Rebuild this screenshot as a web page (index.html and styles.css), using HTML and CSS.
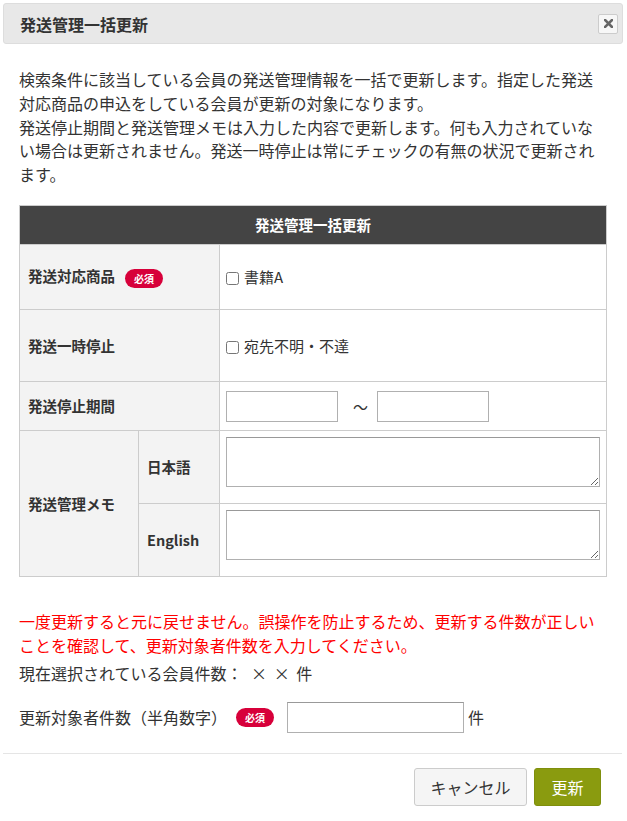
FILE: index.html
```html
<!DOCTYPE html>
<html lang="ja">
<head>
<meta charset="UTF-8">
<meta name="viewport" content="width=device-width, initial-scale=1.0">
<title>発送管理一括更新</title>
<link rel="stylesheet" href="styles.css">
</head>
<body>
<div class="modal">
    <div class="modal-header">
        <h3 class="modal-title">発送管理一括更新</h3>
        <button type="button" class="close" aria-label="閉じる">
            <svg width="9" height="9" viewBox="0 0 9 9"><path d="M1 1L8 8M8 1L1 8" stroke="#666" stroke-width="2.6" stroke-linecap="square"/></svg>
        </button>
    </div>

    <div class="modal-body">
        <p class="lead">検索条件に該当している会員の発送管理情報を一括で更新します。指定した発送対応商品の申込をしている会員が更新の対象になります。<br>発送停止期間と発送管理メモは入力した内容で更新します。何も入力されていない場合は更新されません。発送一時停止は常にチェックの有無の状況で更新されます。</p>

        <table class="form-table">
            <colgroup>
                <col class="col-label">
                <col class="col-sub">
                <col>
            </colgroup>
            <tr>
                <th colspan="3" class="caption">発送管理一括更新</th>
            </tr>
            <tr class="row-product">
                <td colspan="2" class="label">発送対応商品<span class="badge">必須</span></td>
                <td class="value"><label><input type="checkbox">書籍A</label></td>
            </tr>
            <tr class="row-stop">
                <td colspan="2" class="label">発送一時停止</td>
                <td class="value"><label><input type="checkbox">宛先不明・不達</label></td>
            </tr>
            <tr class="row-period">
                <td colspan="2" class="label">発送停止期間</td>
                <td class="value"><input type="text" class="date"><span class="tilde">〜</span><input type="text" class="date"></td>
            </tr>
            <tr class="row-memo">
                <td rowspan="2" class="label">発送管理メモ</td>
                <td class="label">日本語</td>
                <td class="value"><textarea></textarea></td>
            </tr>
            <tr class="row-memo">
                <td class="label">English</td>
                <td class="value"><textarea></textarea></td>
            </tr>
        </table>

        <p class="notice">一度更新すると元に戻せません。誤操作を防止するため、更新する件数が正しいことを確認して、更新対象者件数を入力してください。</p>
        <p class="count">現在選択されている会員件数：<span class="count-num"> × × 件</span></p>

        <div class="target-row">
            <span>更新対象者件数（半角数字）</span>
            <span class="badge">必須</span>
            <input type="text" class="target-input">
            <span class="unit">件</span>
        </div>
    </div>

    <div class="modal-footer">
        <button type="button" class="btn btn-cancel">キャンセル</button>
        <button type="button" class="btn btn-submit">更新</button>
    </div>
</div>
</body>
</html>
```

FILE: styles.css
```css
/* Global styles */
body {
    margin: 0;
    padding: 0;
    font-family: "Noto Sans CJK JP", "Noto Sans", sans-serif;
    font-size: 16px;
    color: #333;
    background-color: #fff;
}

/* Header */
.modal-header {
    display: flex;
    align-items: center;
    justify-content: space-between;
    height: 39px;
    margin: 3px 4px 0 3px;
    padding: 0 4px 0 16px;
    background-color: #e8e8e8;
    border: 1px solid #ddd;
    border-radius: 3px;
}
.modal-title {
    margin: 0;
    font-size: 16px;
    font-weight: bold;
}
.close {
    display: flex;
    align-items: center;
    justify-content: center;
    width: 20px;
    height: 20px;
    padding: 0;
    box-sizing: border-box;
    background-color: #f7f7f7;
    border: 1px solid #ccc;
    border-radius: 2px;
}

/* Body */
.modal-body {
    padding: 24px 20px 0 19px;
}
.lead {
    margin: 0 0 18px;
    line-height: 23.75px;
}

.form-table {
    width: 100%;
    table-layout: fixed;
    border-collapse: collapse;
    border: 1px solid #ccc;
}
.col-label {
    width: 119px;
}
.col-sub {
    width: 81px;
}
.form-table th,
.form-table td {
    border: 1px solid #ccc;
    padding: 0;
}
.caption {
    height: 38px;
    background-color: #444;
    color: #fff;
    font-size: 14.5px;
    font-weight: bold;
}
.label {
    padding-left: 8px !important;
    background-color: #f3f3f3;
    font-size: 14.5px;
    font-weight: bold;
}
.value {
    padding-left: 6px !important;
    padding-right: 6px !important;
    font-size: 15px;
}
.row-product td {
    height: 64px;
}
.row-stop td {
    height: 71px;
}
.row-period td {
    height: 48px;
}
.row-period .value {
    line-height: 31px;
}
.row-memo .value {
    padding-top: 6px !important;
    padding-bottom: 16px !important;
}

.value input[type="checkbox"] {
    width: 13px;
    height: 13px;
    margin: 0 5px 0 0;
    vertical-align: -2px;
}
.date {
    width: 112px;
    height: 31px;
    box-sizing: border-box;
    border: 1px solid #b0b0b0;
    vertical-align: middle;
}
.tilde {
    display: inline-block;
    margin: 0 9px 0 15px;
    vertical-align: middle;
}
textarea {
    display: block;
    width: 100%;
    height: 50px;
    box-sizing: border-box;
    border: 1px solid #b0b0b0;
    border-top-color: #999;
}

.badge {
    display: inline-flex;
    align-items: center;
    justify-content: center;
    width: 38px;
    height: 19px;
    margin-left: 10px;
    vertical-align: middle;
    background-color: #d7003a;
    color: #fff;
    font-size: 10px;
    font-weight: bold;
    border-radius: 10px;
}

.notice {
    margin: 32px 0 4px;
    line-height: 24px;
    color: #f00;
}
.count {
    margin: 0;
    line-height: 24px;
}
.count-num {
    word-spacing: 3px;
    margin-left: 2px;
}
.target-row {
    display: flex;
    align-items: center;
    margin-top: 17px;
}
.target-row .badge {
    margin-left: 9px;
}
.target-input {
    width: 177px;
    height: 31px;
    margin-left: 13px;
    box-sizing: border-box;
    border: 1px solid #b0b0b0;
    border-top-color: #999;
}
.unit {
    margin-left: 4px;
}

/* Footer */
.modal-footer {
    display: flex;
    justify-content: flex-end;
    gap: 7px;
    margin: 20px 5px 0 3px;
    padding: 14px 21px 16px 0;
    border-top: 1px solid #e5e5e5;
}
.btn {
    height: 38px;
    font-family: inherit;
    font-size: 16px;
    border-radius: 3px;
}
.btn-cancel {
    padding: 0 15.5px;
    background-color: #f5f5f5;
    border: 1px solid #ccc;
    color: #333;
}
.btn-submit {
    padding: 0 16.5px;
    background-color: #8a9b0f;
    border: 1px solid #7f8f0d;
    color: #fff;
}
```
